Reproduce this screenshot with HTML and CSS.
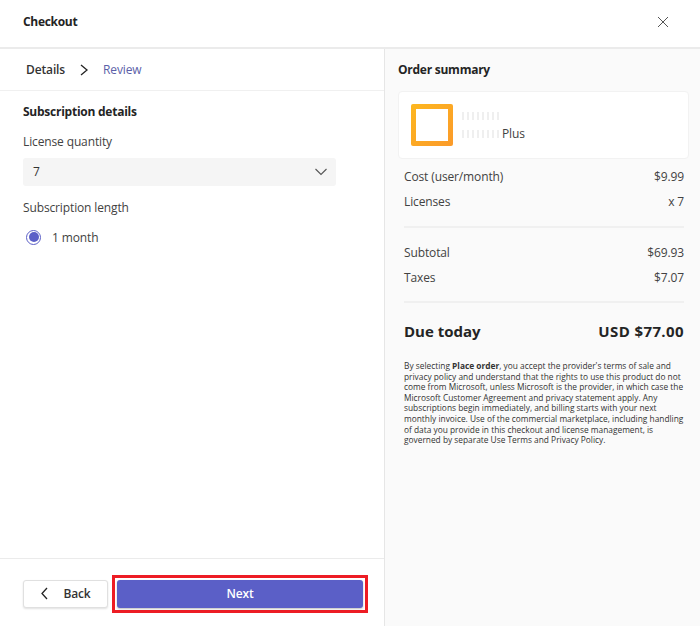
FILE: index.html
```html
<!DOCTYPE html>
<html lang="en">
<head>
    <meta charset="UTF-8">
    <meta name="viewport" content="width=device-width, initial-scale=1.0">
    <title>Checkout</title>
    <link rel="stylesheet" href="styles.css">
</head>
<body>
    <!-- Header -->
    <header class="header">
        <h1 class="title">Checkout</h1>
        <svg class="close" width="14" height="14" viewBox="0 0 14 14"><path d="M2 2l10 10M12 2L2 12" stroke="#555" stroke-width="1" fill="none"/></svg>
    </header>

    <div class="columns">
        <!-- Left column -->
        <main class="left">
            <nav class="steps">
                <span class="step-current">Details</span>
                <svg class="step-arrow" width="10" height="14" viewBox="0 0 10 14"><path d="M2 2l6 5-6 5" stroke="#242424" stroke-width="1.3" fill="none"/></svg>
                <span class="step-next">Review</span>
            </nav>
            <section class="form">
                <h2 class="form-title">Subscription details</h2>
                <div class="label">License quantity</div>
                <div class="select">
                    <span>7</span>
                    <svg width="14" height="8" viewBox="0 0 14 8"><path d="M1.5 1l5.5 5.5L12.500 1" stroke="#555" stroke-width="1.1" fill="none"/></svg>
                </div>
                <div class="label label-length">Subscription length</div>
                <div class="radio-row">
                    <span class="radio"><span class="radio-dot"></span></span>
                    <span>1 month</span>
                </div>
            </section>
            <footer class="footer">
                <button class="btn-back">
                    <svg width="9" height="13" viewBox="0 0 9 13"><path d="M7 1L2 6.500l5 5.500" stroke="#242424" stroke-width="1.3" fill="none"/></svg>
                    Back
                </button>
                <div class="highlight">
                    <button class="btn-next">Next</button>
                </div>
            </footer>
        </main>

        <!-- Order summary -->
        <aside class="right">
            <h2 class="summary-title">Order summary</h2>
            <div class="product">
                <div class="logo"><div class="logo-inner"></div></div>
                <div class="product-text">
                    <div><span class="redacted redacted-top"></span></div>
                    <div class="product-name"><span class="redacted redacted-name"></span> Plus</div>
                </div>
            </div>
            <div class="rows rows-first">
                <div class="row"><span>Cost (user/month)</span><span>$9.99</span></div>
                <div class="row"><span>Licenses</span><span>x 7</span></div>
            </div>
            <div class="rows">
                <div class="row"><span>Subtotal</span><span>$69.93</span></div>
                <div class="row"><span>Taxes</span><span>$7.07</span></div>
            </div>
            <div class="due"><span>Due today</span><span class="due-total">USD $77.00</span></div>
            <p class="legal">By selecting <b>Place order</b>, you accept the provider's terms of sale and<br>privacy policy and understand that the rights to use this product do not<br>come from Microsoft, unless Microsoft is the provider, in which case the<br>Microsoft Customer Agreement and privacy statement apply. Any<br>subscriptions begin immediately, and billing starts with your next<br>monthly invoice. Use of the commercial marketplace, including handling<br>of data you provide in this checkout and license management, is<br>governed by separate Use Terms and Privacy Policy.</p>
        </aside>
    </div>
</body>
</html>
```

FILE: styles.css
```css
html, body {
    height: 100%;
}

body {
    margin: 0;
    display: flex;
    flex-direction: column;
    font-family: "Open Sans", "Noto Sans", sans-serif;
    font-size: 12px;
    letter-spacing: -0.13px;
    color: #424242;
    background-color: #ffffff;
    overflow: hidden;
}

.header {
    flex: none;
    height: 49px;
    display: flex;
    align-items: center;
    justify-content: space-between;
    padding: 0 30px 4px 23px;
    box-sizing: border-box;
    border-bottom: 2px solid #ebebeb;
}

.title {
    margin: 0;
    font-size: 12px;
    font-weight: 700;
    letter-spacing: -0.3px;
    color: #242424;
}

.columns {
    flex: 1;
    display: flex;
    min-height: 0;
}

/* left column */
.left {
    width: 385px;
    flex: none;
    display: flex;
    flex-direction: column;
    box-sizing: border-box;
    border-right: 1px solid #e6e6e6;
}

.steps {
    height: 42px;
    flex: none;
    box-sizing: border-box;
    display: flex;
    align-items: center;
    padding-left: 26px;
    border-bottom: 1px solid #f0f0f0;
}

.step-current {
    font-weight: 600;
    color: #333333;
}

.step-arrow {
    margin-left: 14px;
    margin-right: 14px;
}

.step-next {
    color: #5b5fa8;
}

.form {
    flex: 1;
    padding: 12px 48px 0 23px;
}

.form-title {
    margin: 0;
    font-size: 12px;
    font-weight: 700;
    letter-spacing: -0.25px;
    color: #242424;
    line-height: 17px;
}

.label {
    margin-top: 13px;
    line-height: 17px;
}

.select {
    margin-top: 8px;
    height: 28px;
    box-sizing: border-box;
    display: flex;
    align-items: center;
    justify-content: space-between;
    padding: 0 8px 2px 10px;
    background-color: #f5f5f5;
    border-radius: 3px;
    color: #333333;
}

.select svg {
    margin-top: 2px;
}

.label-length {
    margin-top: 13px;
}

.radio-row {
    margin-top: 13px;
    display: flex;
    align-items: center;
    gap: 11px;
    padding-left: 3px;
    height: 16px;
}

.radio {
    width: 15px;
    height: 15px;
    box-sizing: border-box;
    border: 1px solid #5b5fc7;
    border-radius: 50%;
    display: flex;
    align-items: center;
    justify-content: center;
}

.radio-dot {
    width: 10px;
    height: 10px;
    border-radius: 50%;
    background-color: #5b5fc7;
}

.footer {
    flex: none;
    height: 68px;
    box-sizing: border-box;
    border-top: 1px solid #ebebeb;
    display: flex;
    align-items: center;
    padding: 2px 16px 0 23px;
    gap: 4px;
}

button {
    font-family: inherit;
    font-size: 12px;
    font-weight: 600;
    letter-spacing: -0.13px;
    border-radius: 3px;
    height: 28px;
    cursor: pointer;
}

.btn-back {
    width: 85px;
    flex: none;
    display: flex;
    align-items: center;
    justify-content: center;
    gap: 14px;
    padding: 0;
    color: #333333;
    background-color: #ffffff;
    border: 1px solid #e0e0e0;
    box-shadow: 0 1px 2px rgba(0, 0, 0, 0.12);
}

.highlight {
    flex: 1;
    border: 3px solid #ed1c24;
    padding: 2px;
    display: flex;
}

.btn-next {
    flex: 1;
    color: #ffffff;
    background-color: #5b5fc7;
    border: none;
    box-shadow: 0 1px 2px rgba(0, 0, 0, 0.25);
}

/* right column */
.right {
    flex: 1;
    background-color: #fafafa;
    padding: 12px 11px 0 13px;
}

.summary-title {
    margin: 0;
    font-size: 12px;
    font-weight: 700;
    letter-spacing: -0.25px;
    color: #242424;
    line-height: 17px;
}

.product {
    margin-top: 13px;
    height: 68px;
    box-sizing: border-box;
    display: flex;
    align-items: center;
    gap: 9px;
    padding-left: 12px;
    background-color: #ffffff;
    border-radius: 4px;
    border: 1px solid #f2f2f2;
}

.logo {
    width: 42px;
    height: 42px;
    box-sizing: border-box;
    padding: 5px;
    border-radius: 2px;
    background: linear-gradient(135deg, #fdb71f, #fb9a2a);
}

.logo-inner {
    width: 100%;
    height: 100%;
    background-color: #ffffff;
}

.product-text {
    line-height: 18px;
}

.redacted {
    display: inline-block;
    height: 8px;
    background: repeating-linear-gradient(90deg, #efefef 0 2px, #ffffff 2px 5px);
}

.redacted-top {
    width: 37px;
}

.redacted-name {
    width: 37px;
}

.rows {
    margin: 0 5px 0 6px;
    padding: 16px 0 15px;
    border-bottom: 2px solid #f0f0f0;
    display: flex;
    flex-direction: column;
    gap: 8px;
}

.rows-first {
    padding-top: 9px;
    padding-bottom: 16px;
}

.row {
    display: flex;
    justify-content: space-between;
    line-height: 17px;
}

.due {
    margin: 18px 5px 0 6px;
    display: flex;
    justify-content: space-between;
    font-size: 15px;
    font-weight: 700;
    letter-spacing: 0;
    line-height: 20px;
    color: #242424;
}

.due-total {
    letter-spacing: 0.4px;
}

.legal {
    margin: 20px 0 0 6px;
    font-size: 8.35px;
    letter-spacing: 0;
    line-height: 10.6px;
    color: #333333;
    white-space: nowrap;
}
```
